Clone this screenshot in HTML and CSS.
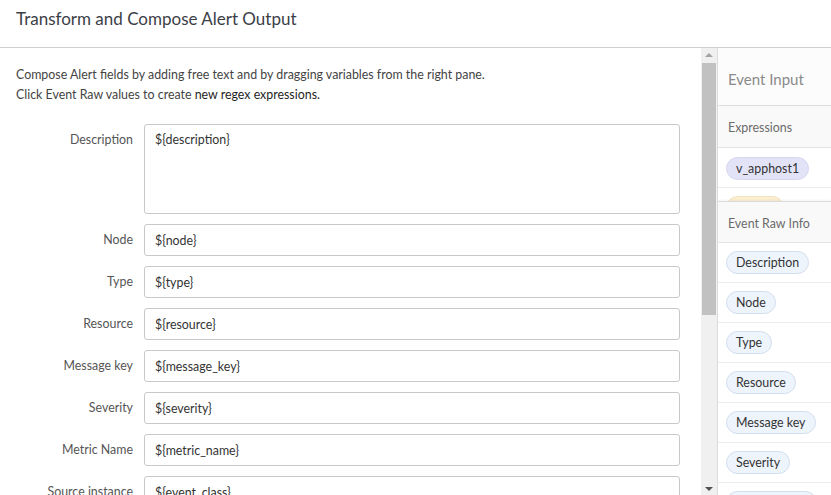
FILE: index.html
```html
<!DOCTYPE html>
<html lang="en">
<head>
    <meta charset="UTF-8">
    <meta name="viewport" content="width=device-width, initial-scale=1.0">
    <title>Transform and Compose Alert Output</title>
    <link rel="stylesheet" href="styles.css">
</head>
<body>
<div class="header">
    <h1>Transform and Compose Alert Output</h1>
</div>

<div class="content">
    <div class="main">
        <p class="intro">
            Compose Alert fields by adding free text and by dragging variables from the right pane.<br>
            Click Event Raw values to create <span class="link">new regex expressions.</span>
        </p>

        <form class="compose">
            <label for="description">Description</label>
            <textarea id="description">${description}</textarea>

            <label for="node">Node</label>
            <input type="text" id="node" value="${node}">

            <label for="type">Type</label>
            <input type="text" id="type" value="${type}">

            <label for="resource">Resource</label>
            <input type="text" id="resource" value="${resource}">

            <label for="messageKey">Message key</label>
            <input type="text" id="messageKey" value="${message_key}">

            <label for="severity">Severity</label>
            <input type="text" id="severity" value="${severity}">

            <label for="metricName">Metric Name</label>
            <input type="text" id="metricName" value="${metric_name}">

            <label for="sourceInstance">Source instance</label>
            <input type="text" id="sourceInstance" value="${event_class}">
        </form>
    </div>

    <div class="scrollbar">
        <div class="arrow-up"></div>
        <div class="thumb"></div>
        <div class="arrow-down"></div>
    </div>

    <div class="side">
        <div class="side-title">Event Input</div>
        <div class="side-section">Expressions</div>
        <div class="pill-row pill-row-expr"><span class="pill pill-expr">v_apphost1</span></div>
        <div class="pill-row pill-row-cut"><span class="pill pill-yellow">&nbsp;</span></div>
        <div class="side-section side-raw">Event Raw Info</div>
        <div class="pill-row"><span class="pill">Description</span></div>
        <div class="pill-row"><span class="pill">Node</span></div>
        <div class="pill-row"><span class="pill">Type</span></div>
        <div class="pill-row"><span class="pill">Resource</span></div>
        <div class="pill-row"><span class="pill">Message key</span></div>
        <div class="pill-row"><span class="pill">Severity</span></div>
        <div class="pill-row"><span class="pill">Metric Name</span></div>
    </div>
</div>
</body>
</html>
```

FILE: styles.css
```css
/* General */
body {
    margin: 0;
    height: 495px;
    overflow: hidden;
    background: #fff;
    font-family: Lato, "Open Sans", sans-serif;
    color: #333;
}

/* Header */
.header {
    box-sizing: border-box;
    height: 48px;
    border-bottom: 1px solid #cfcfcf;
}

.header h1 {
    margin: 0;
    padding: 8px 16px 0;
    font-size: 17px;
    font-weight: normal;
    line-height: 22px;
    color: #3c4047;
}

.content {
    display: flex;
    height: 447px;
}

/* Form area */
.main {
    flex: 1;
    overflow: hidden;
    padding: 17px 20px 0 16px;
}

.intro {
    margin: 0 0 19px;
    font-size: 12.4px;
    line-height: 20px;
    color: #444;
}

.link {
    color: #1f1f1f;
}

.compose {
    display: grid;
    grid-template-columns: 117px 536px;
    column-gap: 11px;
    row-gap: 10px;
}

.compose label {
    text-align: right;
    font-size: 12.4px;
    line-height: 18px;
    padding-top: 7px;
    color: #555;
}

.compose input,
.compose textarea {
    box-sizing: border-box;
    width: 100%;
    height: 32px;
    margin: 0;
    padding: 0 10px;
    border: 1px solid #c9c9c9;
    border-radius: 3px;
    font-family: inherit;
    font-size: 12.4px;
    color: #333;
    background: #fff;
}

.compose textarea {
    height: 90px;
    padding: 7px 10px;
    line-height: 16px;
    resize: none;
}

/* Scrollbar */
.scrollbar {
    width: 16px;
    background: #f0f0f0;
    display: flex;
    flex-direction: column;
    align-items: center;
}

.arrow-up,
.arrow-down {
    width: 0;
    height: 0;
    border-left: 4px solid transparent;
    border-right: 4px solid transparent;
}

.arrow-up {
    margin: 5px 0 6px;
    border-bottom: 4px solid #a3a3a3;
}

.thumb {
    width: 14px;
    height: 252px;
    background: #c1c1c1;
}

.arrow-down {
    margin-top: auto;
    margin-bottom: 4px;
    border-top: 4px solid #505050;
}

/* Right pane */
.side {
    width: 113px;
    flex-shrink: 0;
    border-left: 1px solid #dcdcdc;
    overflow: hidden;
    background: #fff;
}

.side-title {
    height: 58px;
    box-sizing: border-box;
    padding: 20px 0 0 10px;
    font-size: 15px;
    line-height: 22px;
    color: #8a8a8a;
    border-bottom: 1px solid #dedede;
    background: #fcfcfc;
}

.side-section {
    height: 42px;
    box-sizing: border-box;
    padding: 13px 0 0 10px;
    font-size: 12.4px;
    line-height: 18px;
    color: #6b6b6b;
    background: #f9f9f9;
    border-bottom: 1px solid #e4e4e4;
}

.side-raw {
    position: relative;
    border-top: 1px solid #dcdcdc;
    margin-top: -1px;
    padding-top: 13px;
    box-shadow: 0 -1px 2px rgba(0, 0, 0, 0.05);
}

.pill-row {
    height: 40px;
    box-sizing: border-box;
    padding: 8px 0 0 8px;
    border-bottom: 1px solid #ececec;
}

.pill-row-expr {
    padding-top: 9px;
}

.pill-row-cut {
    height: 14px;
    border-bottom: none;
    overflow: hidden;
}

.pill {
    display: inline-block;
    height: 23px;
    box-sizing: border-box;
    padding: 0 9px;
    border: 1px solid #d3deed;
    border-radius: 12px;
    background: #eef4fc;
    font-size: 12.4px;
    line-height: 21px;
    color: #333;
    white-space: nowrap;
}

.pill-expr {
    background: #e3e3f8;
    border-color: #d6d6ef;
}

.pill-yellow {
    width: 58px;
    background: #fcefd0;
    border-color: #f1e2bd;
}
```
